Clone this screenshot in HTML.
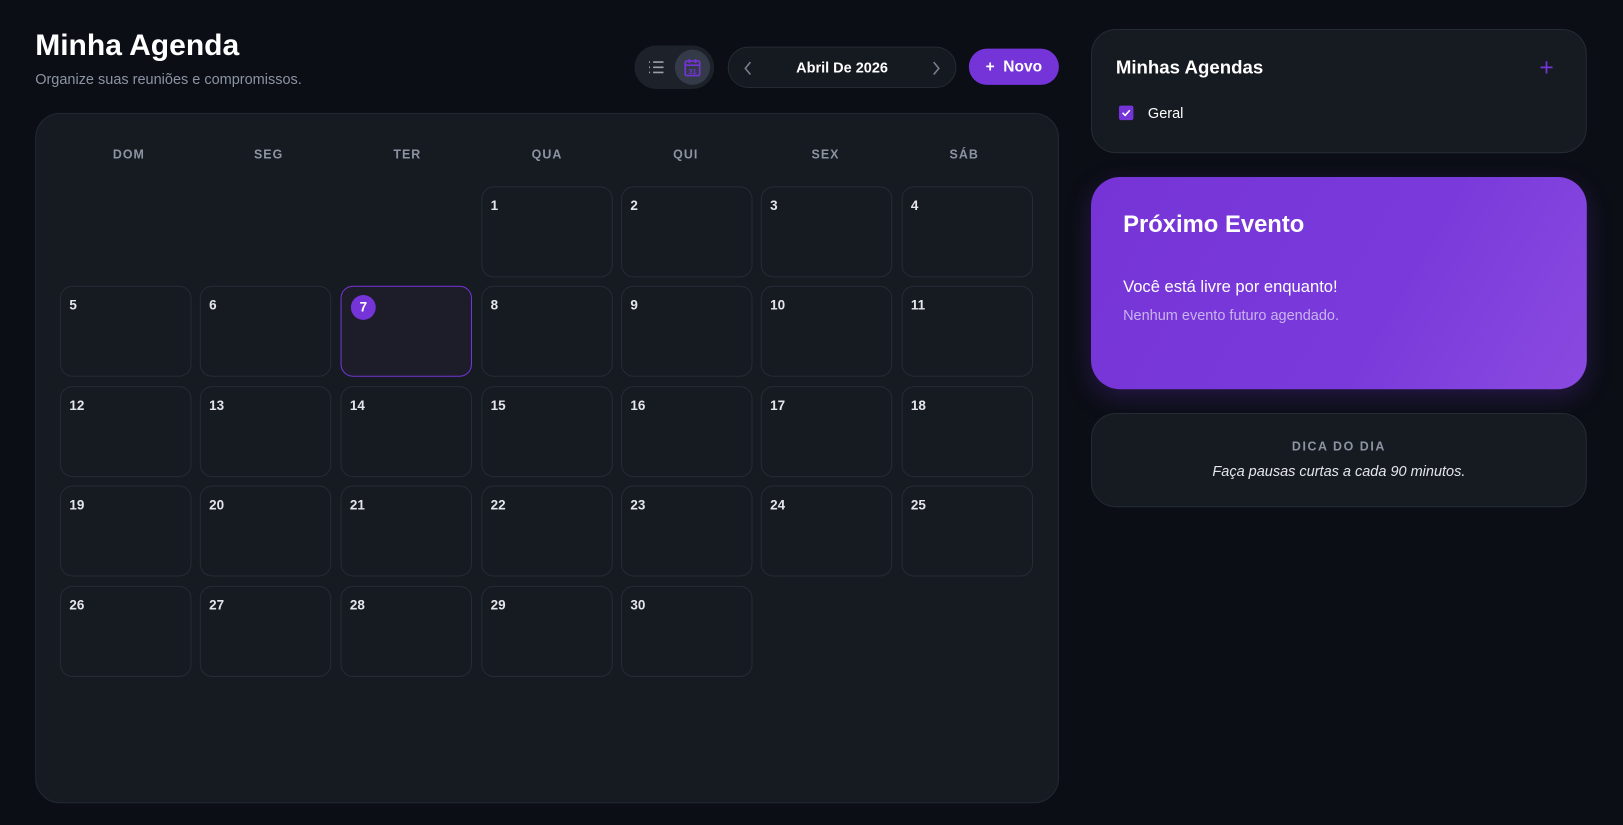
<!DOCTYPE html>
<html><head><meta charset="utf-8"><style>
*{box-sizing:border-box;margin:0;padding:0}
body{width:1623px;height:825px;background:#0b0e15;font-family:"Liberation Sans",sans-serif;color:#fff;position:relative;overflow:hidden}
#w{position:absolute;left:0;top:0;width:1568px;height:797px;transform:scale(1.0351);transform-origin:0 0}
.abs{position:absolute}
h1{position:absolute;left:34px;top:28px;font-size:29px;font-weight:700}
.sub{left:34px;top:68px;font-size:14px;color:#8c93a3}
.toggle{left:613px;top:44px;width:77px;height:42px;border-radius:21px;background:#1d2129}
.toggle .on{position:absolute;left:39px;top:4px;width:34px;height:34px;border-radius:50%;background:#353a48}
.nav{left:703px;top:45px;width:221px;height:40px;border-radius:20px;background:#151920;border:1px solid #252a33;font-size:14px;font-weight:700;text-align:center;line-height:38px}
.novo{left:936px;top:47px;width:87px;height:35px;border-radius:18px;background:#7434d8;font-size:15px;font-weight:700;line-height:35px;text-align:center}
.cal{left:34px;top:109px;width:989px;height:667px;border-radius:24px;background:#161a21;border:1px solid #232832}
.dn{position:absolute;top:142px;width:127px;text-align:center;font-size:12px;font-weight:700;color:#8c93a3;letter-spacing:1px}
.c{position:absolute;width:127px;height:88px;border-radius:12px;background:#161a21;border:1px solid #262b35;font-size:13px;font-weight:700;color:#e4e6ea;padding:10px 8px}
.c.t{background:#1c1d29;border:1px solid #7434d8}
.c.t span{display:inline-block;width:24px;height:24px;border-radius:50%;background:#7434d8;text-align:center;line-height:24px;color:#fff;margin-top:-2px;margin-left:1px}
.box{border-radius:24px;background:#161a21;border:1px solid #252a33}
</style></head><body><div id="w">
<h1>Minha Agenda</h1>
<div class="abs sub">Organize suas reuniões e compromissos.</div>
<div class="abs toggle">
<svg class="abs" style="left:13px;top:13px" width="16" height="16" viewBox="0 0 16 16" stroke="#9aa0ad" stroke-width="1.6" fill="none"><path d="M1 3h1M1 8h1M1 13h1M5 3h10M5 8h10M5 13h10"/></svg>
<div class="on"><svg class="abs" style="left:9px;top:8px" width="16" height="18" viewBox="0 0 16 18" stroke="#7434d8" stroke-width="1.6" fill="none"><rect x="1" y="3" width="14" height="14" rx="1.5"/><path d="M1 7h14M5 1v4M11 1v4"/><text x="8" y="15.5" font-size="7" fill="#7434d8" stroke="none" text-anchor="middle" font-weight="700" font-family="Liberation Sans">31</text></svg></div>
</div>
<div class="abs nav">Abril De 2026
<svg class="abs" style="left:14px;top:13px" width="10" height="14" viewBox="0 0 10 14" stroke="#7a8090" stroke-width="1.5" fill="none"><path d="M7 1L2 7l5 6"/></svg>
<svg class="abs" style="right:14px;top:13px" width="10" height="14" viewBox="0 0 10 14" stroke="#7a8090" stroke-width="1.5" fill="none"><path d="M3 1l5 6-5 6"/></svg>
</div>
<div class="abs novo">+&nbsp; Novo</div>
<div class="abs cal"></div>
<div class="dn" style="left:61px">DOM</div><div class="dn" style="left:196px">SEG</div><div class="dn" style="left:330px">TER</div><div class="dn" style="left:465px">QUA</div><div class="dn" style="left:599px">QUI</div><div class="dn" style="left:734px">SEX</div><div class="dn" style="left:868px">SÁB</div>
<div id="g"></div>
<div class="abs box" style="left:1054px;top:28px;width:479px;height:120px"></div>
<div class="abs" style="left:1078px;top:55px;font-size:18px;font-weight:700">Minhas Agendas</div>
<div class="abs" style="left:1487px;top:52px;font-size:24px;color:#7434d8">+</div>
<div class="abs" style="left:1081px;top:102px;width:14px;height:14px;border-radius:2px;background:#7434d8"><svg width="14" height="14" viewBox="0 0 14 14" stroke="#fff" stroke-width="1.5" fill="none"><path d="M3.5 7l2.5 2.5 4.5-5"/></svg></div>
<div class="abs" style="left:1109px;top:101px;font-size:14px">Geral</div>
<div class="abs" style="left:1054px;top:171px;width:479px;height:205px;border-radius:28px;background:linear-gradient(120deg,#7634d6,#7a3adb 60%,#8a4ae0);box-shadow:0 8px 24px rgba(116,52,216,.25)"></div>
<div class="abs" style="left:1085px;top:203px;font-size:23px;font-weight:700">Próximo Evento</div>
<div class="abs" style="left:1085px;top:269px;font-size:16px">Você está livre por enquanto!</div>
<div class="abs" style="left:1085px;top:296px;font-size:14px;color:#c9b3f0">Nenhum evento futuro agendado.</div>
<div class="abs box" style="left:1054px;top:399px;width:479px;height:91px"></div>
<div class="abs" style="left:1054px;top:424px;width:479px;text-align:center;font-size:12px;font-weight:700;color:#8c93a3;letter-spacing:1.5px">DICA DO DIA</div>
<div class="abs" style="left:1054px;top:447px;width:479px;text-align:center;font-size:14px;font-style:italic;color:#e4e6ea">Faça pausas curtas a cada 90 minutos.</div>
</div>
<script>
var xs=[58,193,329,465,600,735,871],ys=[180,276,373,469,566],h='';
for(var d=1;d<=30;d++){var i=d+2,c=i%7,r=Math.floor(i/7);
h+='<div class="c'+(d==7?' t':'')+'" style="left:'+xs[c]+'px;top:'+ys[r]+'px">'+(d==7?'<span>7</span>':d)+'</div>';}
document.getElementById('g').innerHTML=h;
</script>
</body></html>
